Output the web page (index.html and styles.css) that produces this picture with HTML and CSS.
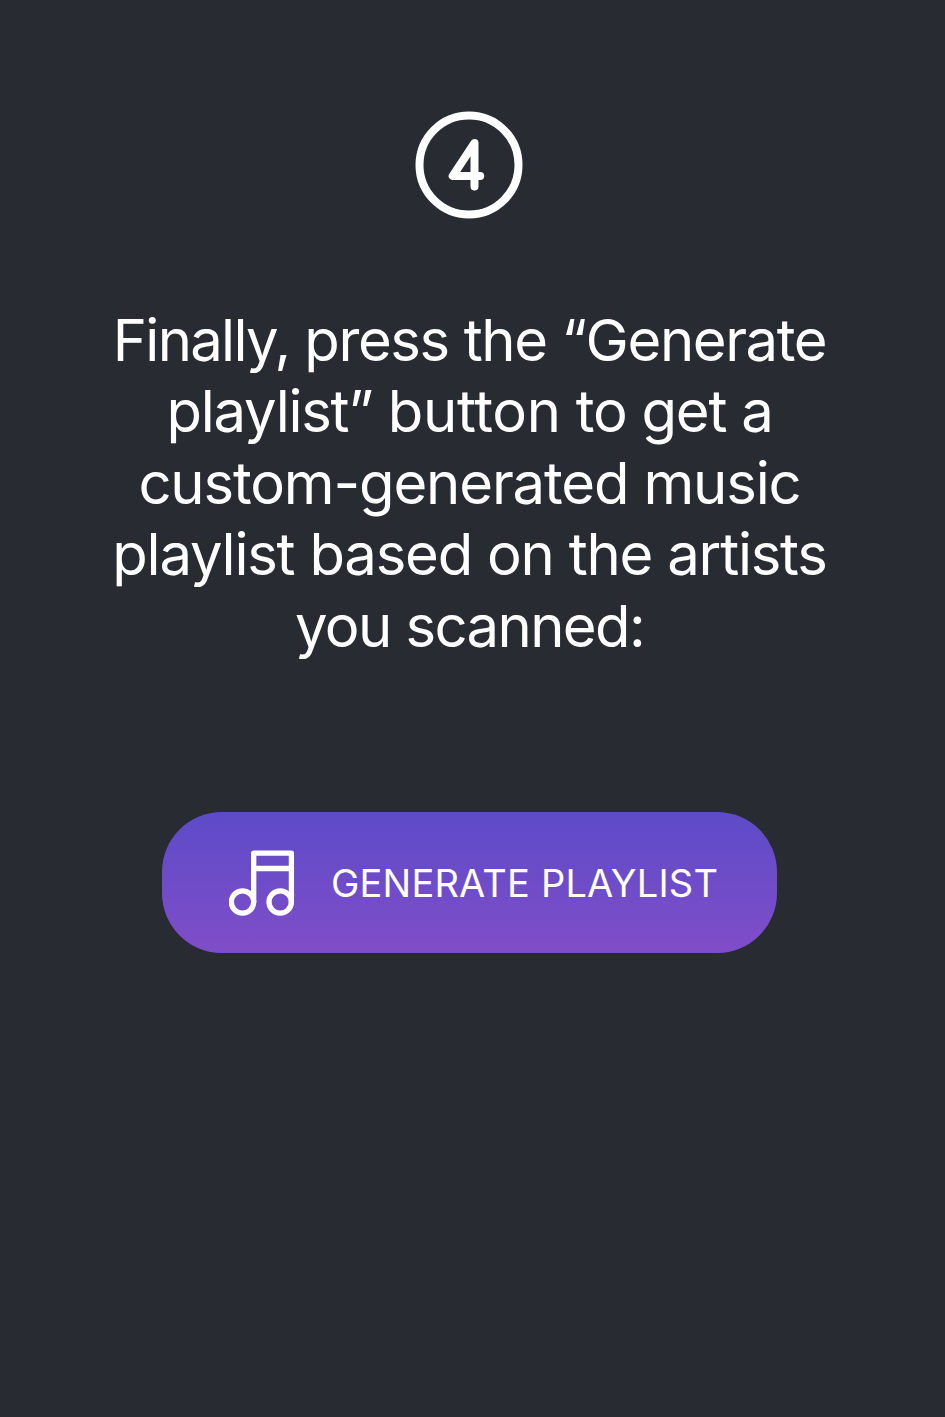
FILE: index.html
```html
<!DOCTYPE html>
<html lang="en">
<head>
<meta charset="utf-8">
<title>Generate playlist</title>
<link rel="stylesheet" href="styles.css">
</head>
<body>
<main class="step">
  <svg class="step-icon" viewBox="0 0 108 108" fill="none" stroke="#fff" stroke-width="8" stroke-linecap="round" stroke-linejoin="round" role="img" aria-label="Step 4">
    <circle cx="54" cy="54" r="49.5"/>
    <path d="M59.500 75.500V32L37.700 65H65.200"/>
  </svg>
  <p class="step-text">
    <span class="line l1"><span class="tight">Finally,</span> press the “Generate</span>
    <span class="line l2">playlist” <span class="wide">button</span> to get a</span>
    <span class="line l3">custom-generated music</span>
    <span class="line l4">playlist based on the artists</span>
    <span class="line l5">you scanned:</span>
  </p>
  <button class="generate" type="button">
    <svg class="note-icon" viewBox="0 0 66 66" fill="none" stroke="#fff" stroke-width="5.300" stroke-linecap="round" stroke-linejoin="round">
      <circle cx="13.500" cy="52" r="11.200"/>
      <circle cx="51.200" cy="52" r="11.200"/>
      <path d="M24.700 52V3.200H62.400V52M24.700 18.500H62.400"/>
    </svg>
    <span class="label">GENERATE PLAYLIST</span>
  </button>
</main>
</body>
</html>
```

FILE: styles.css
```css
body {
  margin: 0;
  background: #292b33;
  color: #fff;
  font-family: Inter, "Liberation Sans", sans-serif;
}

.step {
  box-sizing: border-box;
  width: 939px;
  min-height: 1417px;
  padding-top: 111px;
  display: flex;
  flex-direction: column;
  align-items: center;
}

.step-icon {
  width: 108px;
  height: 108px;
  margin-right: 1px;
}

.step-text {
  margin: 85.5px 0 0;
  font-size: 58px;
  line-height: 71.5px;
  text-align: center;
}

.line {
  display: block;
  white-space: nowrap;
}

.l1 { letter-spacing: -1.4px; }
.l2 { letter-spacing: -1.25px; }
.l3 { letter-spacing: -1.15px; }
.l4 { letter-spacing: -1.22px; }
.l5 { letter-spacing: -1.6px; }

.wide { letter-spacing: -0.3px; }
.tight { letter-spacing: -1.7px; }

.generate {
  box-sizing: border-box;
  width: 615px;
  height: 141px;
  margin-top: 149.5px;
  padding: 1px 0 0 67px;
  display: flex;
  align-items: center;
  gap: 36px;
  border: 0;
  border-radius: 60px;
  background: linear-gradient(#5d4bc8, #804dc8);
  color: #fff;
  font: inherit;
  font-size: 38px;
  letter-spacing: 0.2px;
}

.note-icon {
  flex: none;
  width: 66px;
  height: 66px;
}

.label {
  white-space: nowrap;
}
```
